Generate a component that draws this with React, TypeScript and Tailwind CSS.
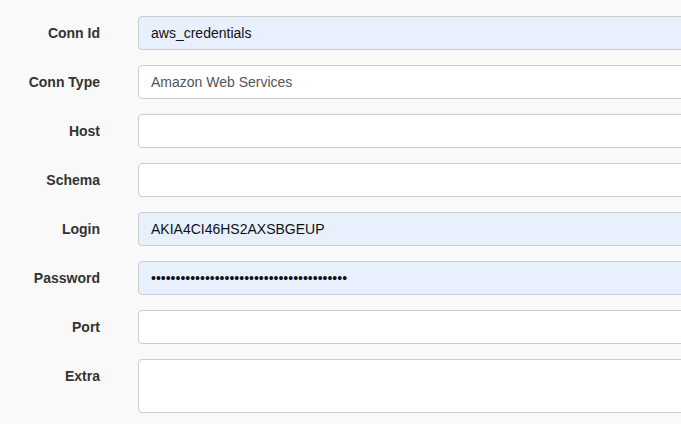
import React from "react";

const rows: { label: string; value?: string; filled?: boolean; tall?: boolean; muted?: boolean }[] = [
  { label: "Conn Id", value: "aws_credentials", filled: true },
  { label: "Conn Type", value: "Amazon Web Services", muted: true },
  { label: "Host" },
  { label: "Schema" },
  { label: "Login", value: "AKIA4CI46HS2AXSBGEUP", filled: true },
  { label: "Password", value: "•".repeat(40), filled: true },
  { label: "Port" },
  { label: "Extra", tall: true },
];

export default function App() {
  return (
    <div className="h-[424px] w-[681px] overflow-hidden bg-[#f9f9f9] font-['Liberation_Sans',Arial,sans-serif] text-[14px]">
      <div className="flex w-[760px] flex-col gap-[15px] pt-4">
        {rows.map((row) => (
          <div key={row.label} className="flex items-start gap-[38px]">
            <label className="w-[100px] pt-[7px] text-right font-bold leading-5 text-[#333]">
              {row.label}
            </label>
            <div
              className={`flex flex-1 rounded border border-[#ccc] px-3 ${
                row.tall ? "h-[54px]" : "h-[34px] items-center"
              } ${row.filled ? "bg-[#e8f0fe]" : "bg-white"} ${
                row.muted ? "text-[#555]" : "text-[#111]"
              }`}
            >
              {row.value}
            </div>
          </div>
        ))}
      </div>
    </div>
  );
}
